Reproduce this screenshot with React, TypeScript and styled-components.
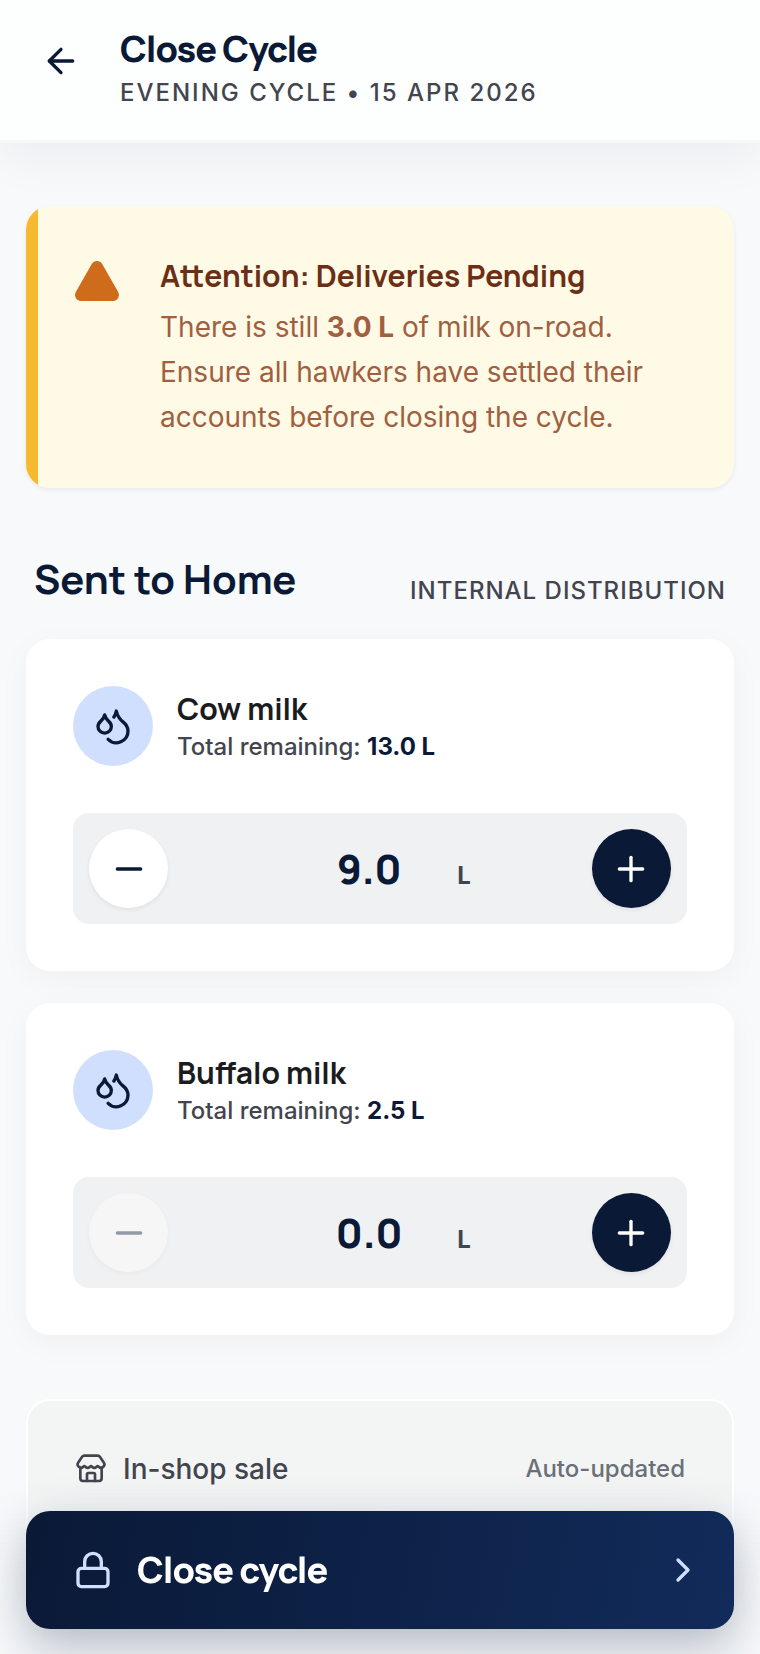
import React, { useState } from "react";
import styled, { createGlobalStyle } from "styled-components";
import { ArrowLeft, ChevronRight, Droplets, Lock, Minus, Plus, Store } from "lucide-react";

const color = {
  navy: "#0a1936",
  ink: "#1a1c1e",
  muted: "#43454e",
  page: "#f7f9fb",
  iceBlue: "#d1dfff",
};

const headingFont = `"Manrope", "Inter", "Liberation Sans", sans-serif`;

const GlobalStyle = createGlobalStyle`
  *, *::before, *::after { box-sizing: border-box; }
  body {
    margin: 0;
    background: ${color.page};
    color: ${color.ink};
    font-family: "Inter", "Liberation Sans", sans-serif;
  }
  h1, h2, h3, p { margin: 0; }
  button, input { font: inherit; }
`;

const Page = styled.div`
  display: flex;
  flex-direction: column;
  min-height: 100vh;
`;

const Header = styled.header`
  display: flex;
  align-items: flex-start;
  gap: 24px;
  padding: 26px 26px 29px;
  background: #fdfefe;
  border-bottom: 3px solid #f6f7f9;
  box-shadow: 0 16px 48px rgba(26, 28, 30, 0.05);
`;

const BackButton = styled.button`
  display: grid;
  place-items: center;
  width: 70px;
  height: 70px;
  padding: 0;
  border: 0;
  border-radius: 50%;
  background: transparent;
  color: ${color.navy};
  cursor: pointer;
`;

const Title = styled.h1`
  font: 800 36px/46px ${headingFont};
  letter-spacing: -1px;
  color: ${color.navy};
`;

const Subtitle = styled.p`
  margin-top: 3px;
  font-size: 24px;
  font-weight: 500;
  line-height: 36px;
  letter-spacing: 2px;
  text-transform: uppercase;
  color: ${color.muted};
`;

const Main = styled.main`
  display: flex;
  flex: 1;
  flex-direction: column;
  padding: 63px 26px 0;
`;

const Alert = styled.section`
  display: flex;
  align-items: flex-start;
  gap: 39px;
  padding: 48px 48px 48px 47px;
  border-radius: 24px;
  background: linear-gradient(to right, #f7b92f 12px, #fefae6 12px);
  box-shadow: 0 2px 4px rgba(26, 28, 30, 0.07);
`;

const AlertIcon = styled.svg`
  flex: none;
  width: 48px;
  height: 48px;
  margin-top: 3px;
  fill: #ce6c1b;
  stroke: #ce6c1b;
  stroke-width: 2;
  stroke-linejoin: round;
`;

const AlertTitle = styled.h2`
  font: 700 30px/44px ${headingFont};
  color: #6b2f15;
`;

const AlertText = styled.p`
  margin-top: 7px;
  font-size: 28px;
  line-height: 45px;
  color: #a06040;

  strong { font-weight: 700; }
`;

const SectionHead = styled.div`
  display: flex;
  align-items: flex-end;
  justify-content: space-between;
  margin: 66px 0 35px;
  padding: 0 8px;
`;

const SectionTitle = styled.h2`
  font: 700 40px/50px ${headingFont};
  color: ${color.navy};
`;

const SectionTag = styled.span`
  font-size: 24px;
  font-weight: 500;
  line-height: 26px;
  letter-spacing: 1px;
  text-transform: uppercase;
  color: ${color.muted};
`;

const CardList = styled.div`
  display: flex;
  flex-direction: column;
  gap: 32px;
`;

const Card = styled.article`
  display: flex;
  flex-direction: column;
  gap: 47px;
  padding: 47px;
  border-radius: 24px;
  background: #fff;
  box-shadow: 0 8px 32px rgba(26, 28, 30, 0.04);
`;

const CardHead = styled.div`
  display: flex;
  align-items: center;
  gap: 24px;
`;

const IconDisc = styled.span`
  display: grid;
  place-items: center;
  width: 80px;
  height: 80px;
  border-radius: 50%;
  background: ${color.iceBlue};
  color: ${color.navy};
`;

const MilkName = styled.h3`
  font: 700 30px/42px ${headingFont};
`;

const Remaining = styled.p`
  font-size: 24px;
  font-weight: 500;
  line-height: 34px;
  color: ${color.muted};

  strong {
    font-weight: 700;
    color: ${color.navy};
  }
`;

const Stepper = styled.div`
  display: flex;
  align-items: center;
  justify-content: space-between;
  padding: 16px;
  border-radius: 16px;
  background: #f0f1f3;
`;

const RoundButton = styled.button<{ $filled?: boolean }>`
  display: grid;
  place-items: center;
  width: 79px;
  height: 79px;
  padding: 0;
  border: 0;
  border-radius: 50%;
  background: ${({ $filled }) => ($filled ? color.navy : "#fff")};
  color: ${({ $filled }) => ($filled ? "#fff" : color.navy)};
  box-shadow: 0 2px 4px rgba(26, 28, 30, 0.07);
  cursor: pointer;

  &:disabled {
    opacity: 0.4;
    cursor: default;
  }
`;

const Amount = styled.label`
  display: flex;
  align-items: baseline;
  gap: 8px;
  padding-top: 7px;
  font-size: 24px;
  font-weight: 700;
  line-height: 48px;
  color: ${color.muted};
`;

const AmountInput = styled.input`
  width: 160px;
  height: 48px;
  padding: 0;
  border: 0;
  outline: 0;
  background: transparent;
  font: 800 40px/48px ${headingFont};
  text-align: center;
  color: ${color.navy};
`;

const ShopCard = styled.section`
  flex: 1;
  margin-top: 64px;
  padding: 48px 47px 0;
  border: 2px solid #fff;
  border-bottom: 0;
  border-radius: 24px 24px 0 0;
  background: #f3f5f5;
`;

const ShopRow = styled.div`
  display: flex;
  align-items: center;
  gap: 16px;
  color: ${color.muted};
`;

const ShopLabel = styled.span`
  flex: 1;
  font-size: 28px;
  font-weight: 500;
  line-height: 40px;
`;

const ShopNote = styled.span`
  font-size: 24px;
  font-weight: 500;
  line-height: 40px;
  color: #6b6f79;
`;

const Footer = styled.footer`
  position: fixed;
  right: 0;
  bottom: 0;
  left: 0;
  display: flex;
  padding: 24px 26px 25px;
  background: linear-gradient(to top, ${color.page} 0%, rgba(247, 249, 251, 0.9) 50%, rgba(247, 249, 251, 0) 100%);
`;

const CloseButton = styled.button`
  display: flex;
  flex: 1;
  align-items: center;
  gap: 24px;
  height: 118px;
  padding: 0 31px 0 47px;
  border: 0;
  border-radius: 24px;
  background: linear-gradient(100deg, #0a1936, #112b5a);
  box-shadow: 0 16px 48px rgba(10, 25, 54, 0.3);
  color: ${color.iceBlue};
  cursor: pointer;
`;

const CloseLabel = styled.span`
  flex: 1;
  font: 800 36px/48px ${headingFont};
  letter-spacing: -1px;
  text-align: left;
  color: #fff;
`;

type Milk = { name: string; remaining: string; sent: number };

const milks: Milk[] = [
  { name: "Cow milk", remaining: "13.0 L", sent: 9 },
  { name: "Buffalo milk", remaining: "2.5 L", sent: 0 },
];

function MilkCard({ name, remaining, sent }: Milk) {
  const [litres, setLitres] = useState(sent);
  return (
    <Card>
      <CardHead>
        <IconDisc>
          <Droplets size={40} />
        </IconDisc>
        <div>
          <MilkName>{name}</MilkName>
          <Remaining>
            Total remaining: <strong>{remaining}</strong>
          </Remaining>
        </div>
      </CardHead>
      <Stepper>
        <RoundButton
          type="button"
          aria-label={`Decrease ${name}`}
          disabled={litres <= 0}
          onClick={() => setLitres(Math.max(0, litres - 0.5))}
        >
          <Minus size={40} />
        </RoundButton>
        <Amount>
          <AmountInput
            aria-label={`${name} sent to home, litres`}
            inputMode="decimal"
            value={litres.toFixed(1)}
            onChange={(e) => setLitres(Number(e.target.value) || 0)}
          />
          L
        </Amount>
        <RoundButton
          type="button"
          $filled
          aria-label={`Increase ${name}`}
          onClick={() => setLitres(litres + 0.5)}
        >
          <Plus size={40} />
        </RoundButton>
      </Stepper>
    </Card>
  );
}

export default function App() {
  return (
    <Page>
      <GlobalStyle />
      <Header>
        <BackButton type="button" aria-label="Back">
          <ArrowLeft size={40} />
        </BackButton>
        <div>
          <Title>Close Cycle</Title>
          <Subtitle>Evening Cycle • 15 Apr 2026</Subtitle>
        </div>
      </Header>

      <Main>
        <Alert>
          <AlertIcon viewBox="0 0 24 24" aria-hidden="true">
            <path d="m21.73 18-8-14a2 2 0 0 0-3.48 0l-8 14A2 2 0 0 0 4 21h16a2 2 0 0 0 1.73-3" />
          </AlertIcon>
          <div>
            <AlertTitle>Attention: Deliveries Pending</AlertTitle>
            <AlertText>
              There is still <strong>3.0 L</strong> of milk on-road. Ensure all hawkers have
              settled their accounts before closing the cycle.
            </AlertText>
          </div>
        </Alert>

        <SectionHead>
          <SectionTitle>Sent to Home</SectionTitle>
          <SectionTag>Internal Distribution</SectionTag>
        </SectionHead>

        <CardList>
          {milks.map((milk) => (
            <MilkCard key={milk.name} {...milk} />
          ))}
        </CardList>

        <ShopCard>
          <ShopRow>
            <Store size={32} />
            <ShopLabel>In-shop sale</ShopLabel>
            <ShopNote>Auto-updated</ShopNote>
          </ShopRow>
        </ShopCard>
      </Main>

      <Footer>
        <CloseButton type="button">
          <Lock size={40} />
          <CloseLabel>Close cycle</CloseLabel>
          <ChevronRight size={40} />
        </CloseButton>
      </Footer>
    </Page>
  );
}
